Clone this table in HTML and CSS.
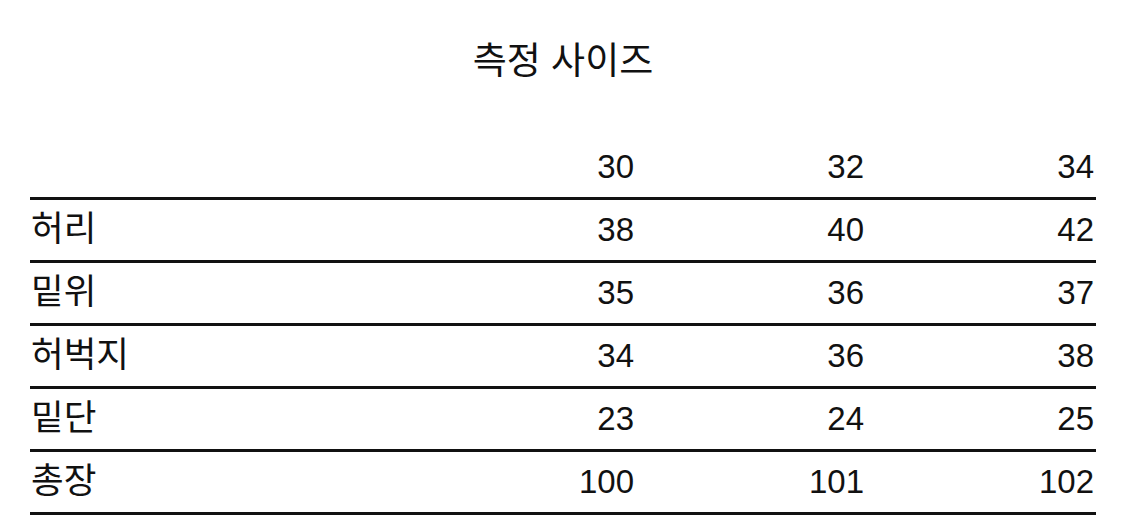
FILE: index.html
```html
<!DOCTYPE html>
<html lang="ko">
<head>
<meta charset="utf-8">
<title>측정 사이즈</title>
<link rel="stylesheet" href="styles.css">
</head>
<body>
<div class="page">
  <h1 class="title">측정 사이즈</h1>
  <table class="size-table">
    <colgroup>
      <col class="col-label">
      <col class="col-val">
      <col class="col-val">
      <col class="col-val">
    </colgroup>
    <thead>
      <tr><th class="label"></th><th>30</th><th>32</th><th>34</th></tr>
    </thead>
    <tbody>
      <tr><td class="label">허리</td><td>38</td><td>40</td><td>42</td></tr>
      <tr><td class="label">밑위</td><td>35</td><td>36</td><td>37</td></tr>
      <tr><td class="label">허벅지</td><td>34</td><td>36</td><td>38</td></tr>
      <tr><td class="label">밑단</td><td>23</td><td>24</td><td>25</td></tr>
      <tr><td class="label">총장</td><td>100</td><td>101</td><td>102</td></tr>
    </tbody>
  </table>
</div>
</body>
</html>
```

FILE: styles.css
```css
html, body {
  margin: 0;
  padding: 0;
  background: #fff;
}
body {
  font-family: "Liberation Sans", "Noto Sans CJK KR", Arial, sans-serif;
  color: #111;
}
.page {
  padding: 0 29px 0 30px;
}
.title {
  margin: 0;
  padding-top: 40px;
  height: 137px;
  box-sizing: border-box;
  text-align: center;
  font-weight: normal;
  font-size: 37px;
  line-height: 44px;
}
.size-table {
  width: 1066px;
  border-collapse: collapse;
  table-layout: fixed;
}
.col-label { width: 376px; }
.col-val { width: 230px; }
.size-table th,
.size-table td {
  font-weight: normal;
  font-size: 33px;
  line-height: 37px;
  height: 37px;
  padding: 11px 2px 12px 0;
  text-align: right;
  border-bottom: 3px solid #111;
  vertical-align: top;
}
.size-table .label {
  text-align: left;
  padding-left: 1px;
  font-size: 35.5px;
}
```
